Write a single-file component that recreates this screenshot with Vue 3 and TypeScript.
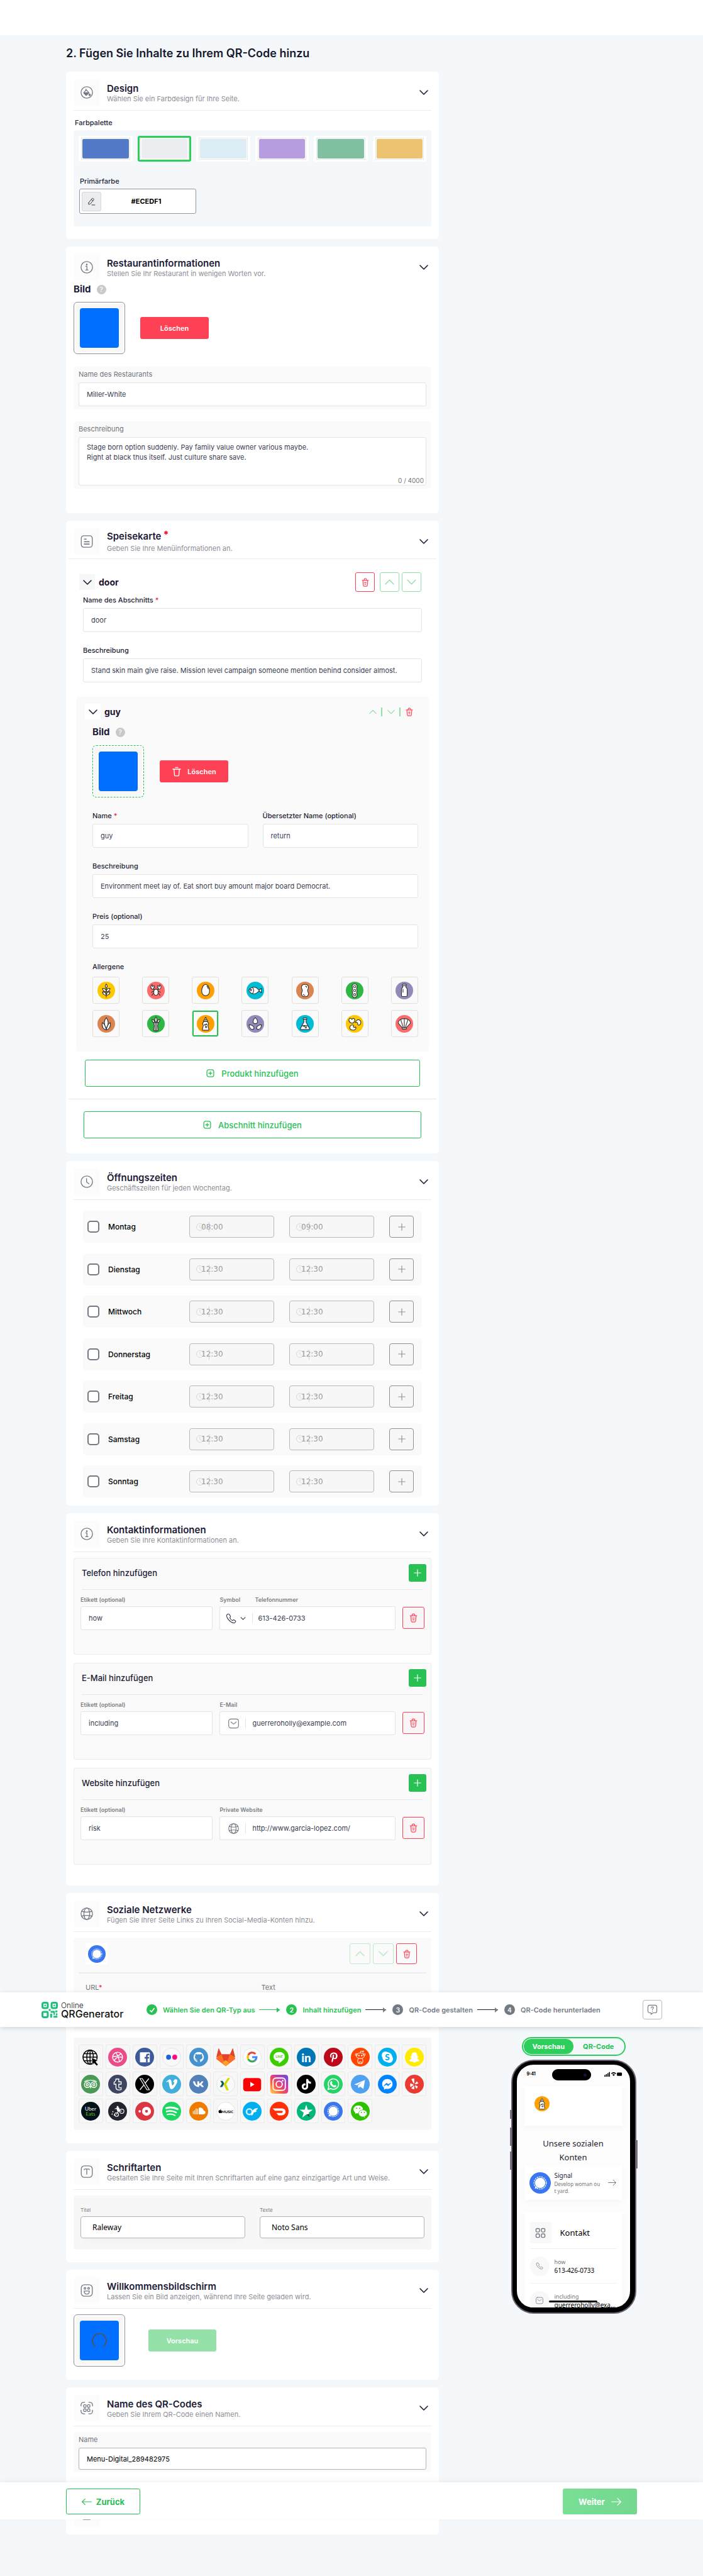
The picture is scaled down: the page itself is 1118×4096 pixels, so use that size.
<script setup lang="ts">
import { ref } from 'vue'

type Swatch = { id: string; color: string }
type Day = { name: string; from: string; to: string }
type Contact = {
  id: string
  title: string
  label: string
  value: string
  fieldLabel: string
  fieldValue: string
  icon: string
}

const description = ref('Stage born option suddenly. Pay family value owner various maybe.\nRight at black thus itself. Just culture share save.')

const swatches: Swatch[] = [
  { id: 'blue', color: '#527ac9' },
  { id: 'grey', color: '#ecedf1' },
  { id: 'sky', color: '#dbecf5' },
  { id: 'lilac', color: '#b69ddf' },
  { id: 'green', color: '#7fc0a1' },
  { id: 'amber', color: '#ecc371' },
]
const selectedSwatch = ref('grey')

const days: Day[] = [
  { name: 'Montag', from: '08:00', to: '09:00' },
  { name: 'Dienstag', from: '12:30', to: '12:30' },
  { name: 'Mittwoch', from: '12:30', to: '12:30' },
  { name: 'Donnerstag', from: '12:30', to: '12:30' },
  { name: 'Freitag', from: '12:30', to: '12:30' },
  { name: 'Samstag', from: '12:30', to: '12:30' },
  { name: 'Sonntag', from: '12:30', to: '12:30' },
]

const contacts: Contact[] = [
  { id: 'tel', title: 'Telefon hinzufügen', label: 'Etikett (optional)', value: 'how', fieldLabel: 'Telefonnummer', fieldValue: '613-426-0733', icon: 'phone' },
  { id: 'mail', title: 'E-Mail hinzufügen', label: 'Etikett (optional)', value: 'including', fieldLabel: 'E-Mail', fieldValue: 'guerreroholly@example.com', icon: 'mail' },
  { id: 'web', title: 'Website hinzufügen', label: 'Etikett (optional)', value: 'risk', fieldLabel: 'Private Website', fieldValue: 'http://www.garcia-lopez.com/', icon: 'globe' },
]

// Line icons on a 24 × 24 grid, drawn with the current text colour.
const line: Record<string, string> = {
  paint: '<circle cx="12" cy="12" r="11"/><path d="M10.500 5.500v3M11 7l5 5.500-4.500 4.500a1 1 0 0 1-1.400 0L6.500 13.500a1 1 0 0 1 0-1.400z"/><path d="M6.500 12.500h9.300L11 17.300z" fill="currentColor"/><path d="M17.500 14.500c1 1.300 1.300 1.800 1.300 2.300a1.300 1.300 0 0 1-2.600 0c0-.5.4-1 1.300-2.300z" fill="currentColor"/>',
  info: '<circle cx="12" cy="12" r="11"/><path d="M10 10h2.300v7M9.800 17.200h4.700"/><circle cx="12" cy="6.800" r=".8" fill="currentColor"/>',
  menu: '<rect x="1.500" y="1" width="21" height="22" rx="5"/><path d="M7.500 7.500h3.500M7.500 12.500h9M7.500 17h9" stroke-width="2"/>',
  clock: '<circle cx="12" cy="12" r="11"/><path d="M11.600 6v6.500l4.400 3.500"/>',
  globe: '<circle cx="12" cy="12" r="11"/><ellipse cx="12" cy="12" rx="5.500" ry="11"/><path d="M2.200 7.500c6 1.600 13.600 1.600 19.600 0M2.200 16.500c6-1.600 13.600-1.600 19.600 0"/>',
  type: '<rect x="1.500" y="1" width="21" height="22" rx="6"/><path d="M7 8.500c0-1 .5-1.500 1.500-1.500h7c1 0 1.500.5 1.500 1.500M12 7v10"/>',
  smile: '<rect x="1.500" y="1" width="21" height="22" rx="6"/><circle cx="8.500" cy="8" r="1.700"/><circle cx="15.500" cy="8" r="1.700"/><path d="M7 13h10c0 4-2 6-5 6s-5-2-5-6z"/>',
  qr: '<path d="M1 8V6a5 5 0 0 1 5-5h2M16 1h2a5 5 0 0 1 5 5v2M23 16v2a5 5 0 0 1-5 5h-2M8 23H6a5 5 0 0 1-5-5v-2"/><rect x="6" y="5.500" width="4.700" height="5" rx="1.500"/><rect x="13.300" y="5.500" width="4.700" height="5" rx="1.500"/><rect x="6" y="13.500" width="4.700" height="5" rx="1.500"/><rect x="13.300" y="13.500" width="4.700" height="5" rx="1.500"/>',
  lock: '<rect x="1.500" y="1" width="21" height="22" rx="6"/>',
  phone: '<path d="M4 2.500 2 4.500C1.500 12 12 22.500 19.500 22l2.500-2.500c.8-.8.5-1.700-.3-2.300l-3-2c-.8-.5-1.500-.4-2.200.3l-1 1.200c-2.500-.8-5.700-4.300-6.300-6.700l1-1c.7-.7.8-1.300.3-2.200L8 3C7.200 1.700 5.300 1.200 4 2.500z"/>',
  mail: '<rect x="1" y="2" width="22" height="20" rx="5"/><path d="m6 8.500 4.500 3.700a2.400 2.400 0 0 0 3 0L18 8.500"/>',
  trash: '<path d="M3.500 6.500h17M8.500 6c.2-2.500.6-4 2-4h3c1.400 0 1.800 1.500 2 4M5.500 8.500l1 11.500c.2 1.700.8 2.500 2.500 2.500h6c1.700 0 2.300-.8 2.500-2.500l1-11.500M9.500 12.500h5M10.500 17h3"/>',
  bin: '<path d="M3 6h18M9 2h6M5.500 6l1.300 14.500c.1 1 .7 1.500 1.700 1.500h7c1 0 1.600-.5 1.700-1.500L18.500 6"/>',
  down: '<path d="m3 7.500 9 9 9-9"/>',
  up: '<path d="m3 16.500 9-9 9 9"/>',
  plus: '<path d="M12 3v18M3 12h18"/>',
  add: '<rect x="2" y="1.500" width="20" height="21" rx="6"/><path d="M12 7.500v9M7.500 12h9"/>',
  pen: '<path d="m4 15 9-11c1.500-1.700 3-2 4.500-.8s1.700 2.700.5 4.300l-9 11c-.6.700-1.200 1-2 1.100l-3 .400c-.6.100-.9-.2-.8-.8l.200-2.500c.1-.7.200-1.200.6-1.700zM12 5.500c.6 2.500 2 3.800 4.500 4.500M13 22h9"/>',
  left: '<path d="M23 12H1M8 5l-7 7 7 7"/>',
  right: '<path d="M1 12h22M15 4l8 8-8 8"/>',
  grid: '<rect x="2" y="2" width="8" height="8" rx="2.500"/><rect x="14" y="2" width="8" height="8" rx="2.500"/><rect x="2" y="14" width="8" height="8" rx="2.500"/><rect x="14" y="14" width="8" height="8" rx="2.500"/>',
  help: '<path d="M6 2h12a4 4 0 0 1 4 4v9a4 4 0 0 1-4 4h-4.500l-4.500 3.500V19H6a4 4 0 0 1-4-4V6a4 4 0 0 1 4-4z"/><path d="M9.500 8c0-1.500 1-2.500 2.500-2.500s2.500 1 2.500 2.300c0 1.900-2.500 2-2.500 4.200M12 14.800v.6"/>',
}

const c = (fill: string, body: string) => `<circle cx="20" cy="20" r="20" fill="${fill}"/>${body}`
const ink = (body: string) => `<g fill="#fff" stroke="#333" stroke-width="1.600" stroke-linejoin="round" stroke-linecap="round">${body}</g>`
const bottle = ink('<path d="M18 11c0-3 .8-5 2-6 1.200 1 2 3 2 6z"/><rect x="15.500" y="11" width="9" height="3.500" rx="1.200"/><path d="M16 14.500h8l3 5-2 4 2.500 9.500c0 1-.6 1.500-1.500 1.500H14c-.9 0-1.500-.5-1.500-1.500L15 23.500l-2-4z"/><circle cx="18.500" cy="22" r="1"/><circle cx="22" cy="21" r="1"/><circle cx="21" cy="27" r="1.500"/>')

const allergens: { id: string; svg: string }[] = [
  { id: 'Gluten', svg: c('#fec700', ink('<path d="M20 5c2.500 3 3.500 6 0 10-3.500-4-2.500-7 0-10z"/><path d="M20 22c-5 1-8-2-8.500-7 5 0 8 2 8.500 7zM20 22c5 1 8-2 8.500-7-5 0-8 2-8.500 7zM20 30c-5 1-8-2-8.500-7 5 0 8 2 8.500 7zM20 30c5 1 8-2 8.500-7-5 0-8 2-8.500 7zM20 15v20"/>')) },
  { id: 'Krebstiere', svg: c('#fc6b6b', ink('<path d="M15 18c-4-.5-7-3-6.500-7 .2-2 1.500-3.500 3-4l.5 4 4-2c1.500 3 .5 5.500-2 5.500zM25 18c4-.5 7-3 6.500-7-.2-2-1.500-3.500-3-4l-.5 4-4-2c-1.500 3-.5 5.500 2 5.500zM10 24c2-2 4-2 6-1M30 24c-2-2-4-2-6-1M11 31c1-3 2.500-4 4.500-4M29 31c-1-3-2.500-4-4.500-4"/><path d="M20 17c4 0 5 3 5 7s-2 7-5 7-5-3-5-7 1-7 5-7z"/>')) },
  { id: 'Eier', svg: c('#ffa000', ink('<path d="M20 6c5 0 9 8 9 15 0 6-4 11-9 11s-9-5-9-11c0-7 4-15 9-15z"/><path d="M23 10c1.500 1.500 2.500 3.500 3 6" fill="none"/>')) },
  { id: 'Fisch', svg: c('#00bcd4', ink('<path d="M28 19.500 34 15v10l-6-4.500"/><path d="M5 20c3-5 7-7.500 12-7.500S26 16 29 20c-3 4-7 7.500-12 7.500S8 25 5 20z"/><path d="M14 13.500c3 4 3 9 0 13" fill="none"/><circle cx="10" cy="19" r="1.700"/>')) },
  { id: 'Erdnüsse', svg: c('#dc8450', ink('<path d="M20 6c5 0 8 3 8 7 0 3-2 4-2 7s2 4 2 7c0 4-3 7-8 7s-8-3-8-7c0-3 2-4 2-7s-2-4-2-7c0-4 3-7 8-7z"/><path d="M21 10c2 0 3 1 3 3M16 29c1 1.500 2 2 4 2" fill="none"/>')) },
  { id: 'Soja', svg: c('#2fb743', ink('<path d="M20 5c4 0 6 3 5.500 6-.5 3-1 3-1 5s1 2 1 4-1 3-1 5 1.500 3 1 6-2 5-5.500 5-5-2-5.500-5 1-4 1-6-1-3-1-5 1-2 1-4-.5-2-1-5 1.500-6 5.500-6z"/><circle cx="20" cy="11" r="2.500"/><circle cx="20" cy="20" r="2.500"/><circle cx="20" cy="29.500" r="2.500"/>')) },
  { id: 'Milch', svg: c('#9389b8', ink('<path d="M16.500 9h7v3c0 1.500 3 2.500 3 5v14c0 1.500-1 2.500-2.500 2.500h-8c-1.500 0-2.500-1-2.500-2.500V17c0-2.500 3-3.500 3-5z"/><rect x="15.500" y="5.500" width="9" height="3.500" rx="1.500"/><path d="M17 17v7"/>')) },
  { id: 'Schalenfrüchte', svg: c('#dc8450', ink('<path d="M20 34c-6-1-11-7-9-17 4 2 7 6 9 17zM20 34c6-1 11-7 9-17-4 2-7 6-9 17z"/><path d="M20 6c5 6 6 15 0 24-6-9-5-18 0-24z"/>')) },
  { id: 'Sellerie', svg: c('#2fb743', ink('<path d="M17 18c-4-1-6-4-6-8 3 0 5 2 6 5zM23 18c4-1 6-4 6-8-3 0-5 2-6 5zM20 4c3 4 3 8 1 12h-2c-2-4-2-8 1-12z"/><path d="M15 17h10l-1 8 1 10c-3 1.500-7 1.500-10 0l1-10zM18.500 18v17M21.500 18v17"/>')) },
  { id: 'Senf', svg: c('#ffa000', bottle) },
  { id: 'Sesam', svg: c('#9389b8', ink('<path d="M20 6c3 3 5 6 5 8.500 0 3-2 5-5 5s-5-2-5-5c0-2.500 2-5.500 5-8.500zM6 22c5 0 11 3 11 7.500 0 2-1.500 3-4 3-4 0-7-5-7-10.500zM34 22c-5 0-11 3-11 7.500 0 2 1.500 3 4 3 4 0 7-5 7-10.500z"/>')) },
  { id: 'Sulfite', svg: c('#00bcd4', ink('<path d="M17.500 9h5v7L30 30c.8 1.700 0 3-1.700 3H11.700C10 33 9.200 31.700 10 30l7.500-14z"/><rect x="16" y="6.500" width="8" height="3" rx="1"/><path d="M13 25c4-1.500 10-1.500 14 0" fill="none"/><circle cx="18" cy="25" r="1.200"/><circle cx="22" cy="28" r="1.600"/>')) },
  { id: 'Lupinen', svg: c('#fec700', ink('<path d="M7 11c0-3 3-5 5-3 .5 2.500 3 2 4-.5 3-.5 5 2 4 6-1 4-5 6-9 4-3-1.500-4-4-4-6.500zM25 12c2-2 6-2 8 1s1 8-2 9.500c-3 1-5-1-4-3.500-1-3-4-3.500-5.500-2 .5-2 2-4 3.500-5zM9 30c-1-4 2-7.500 6-7.500 2.500 0 3.500 2 2 4 1.500 2 4 2 5 .5 2 1.500 1 5.500-3 7-4 1-9-.5-10-4z"/>')) },
  { id: 'Weichtiere', svg: c('#fc6b6b', ink('<path d="M16 29 6.500 19C5 13 12 8 20 8s15 5 13.500 11L24 29z"/><path d="M17.500 28 12 11M22.500 28 28 11M20 28V8"/><rect x="15" y="29" width="10" height="3" rx="1"/>')) },
]
const selectedAllergen = ref('Senf')

const t = (x: number, y: number, size: number, fill: string, s: string, extra = 'font-weight="700"') =>
  `<text x="${x}" y="${y}" font-size="${size}" fill="${fill}" text-anchor="middle" font-family="Lato, sans-serif" ${extra}>${s}</text>`

const signalArt = '<circle cx="20" cy="20" r="11.500" fill="none" stroke="#fff" stroke-width="1.400" stroke-dasharray="3 1.300"/><circle cx="20" cy="20" r="9.700" fill="#fff"/><path d="m10 31 1-5 4.500 3.500z" fill="#fff"/>'

const social: { id: string; svg: string }[] = [
  { id: 'Website', svg: '<g fill="none" stroke="#000" stroke-width="2"><circle cx="19" cy="20" r="15"/><ellipse cx="19" cy="20" rx="7" ry="15"/><path d="M19 5v30M4 20h30M6.500 12.500h25M6.500 27.500h25"/></g><path d="m22 21 14 6-5 2.500 5 6-3 3-5.500-6-3 4z" fill="#000" stroke="#f7f7f7" stroke-width="1"/>' },
  { id: 'Dribbble', svg: c('#ea4c89', '<g fill="none" stroke="#fff" stroke-width="1.900"><circle cx="20" cy="20" r="10.500"/><path d="M16 10.500c4.500 5 6.500 11 8 18.500M9.500 18.500c7.500.5 14-1.500 18-6.500M12.500 27.500c4-7 10-9 18-7"/></g>') },
  { id: 'Facebook', svg: c('#3c5a99', '<rect x="10" y="9.500" width="21" height="21.500" rx="1.500" fill="#fff"/><path d="M23 31v-8h-3v-3.300h3v-2.500c0-3 1.800-4.500 4.500-4.500 1.200 0 2 .1 2.300.2v3H28c-1.500 0-1.700.7-1.700 1.700v2.100h3.300l-.5 3.300h-2.800v8z" fill="#3c5a99"/>') },
  { id: 'Flickr', svg: '<circle cx="20" cy="20" r="19.300" fill="#f9f9f9" stroke="#dcdcdc"/><circle cx="13.500" cy="20" r="5.200" fill="#1d63dc"/><circle cx="26.500" cy="20" r="5.200" fill="#ff0a84"/>' },
  { id: 'GitHub', svg: c('#4493d0', '<circle cx="20" cy="20" r="11" fill="#fff"/><path d="M17 31v-4c-3 .5-4-1-4.500-2 3 1 3 .5 4.500 0-4-1-5-3-5-5.500 0-1.500.5-2.500 1.200-3.300-.3-1 0-2.500.3-3 1.500 0 2.500.8 3.200 1.200 2-.5 4.600-.5 6.600 0 .7-.4 1.700-1.200 3.200-1.200.3.500.6 2 .3 3 .7.8 1.200 1.800 1.200 3.300 0 2.500-1.500 5-5 5.500V31z" fill="#4493d0"/>') },
  { id: 'GitLab', svg: '<path d="M20 39 0 24l5-23 6 13h18l6-13 5 23z" fill="#fc6d26"/><path d="m20 39-9-25h18z" fill="#e24329"/><path d="M5 1 0 20l11-6zM35 1l5 19-11-6z" fill="#e24329"/><path d="m0 23 11-9 9 25z" fill="#fc6d26"/><path d="m40 23-11-9-9 25z" fill="#fc6d26"/><path d="m13 32 7-6 7 6-7 7z" fill="#fca326"/>' },
  { id: 'Google', svg: '<circle cx="20" cy="20" r="19.300" fill="#fff" stroke="#dcdcdc"/><g fill="none" stroke-width="4"><path d="M27 13.300A9.300 9.300 0 0 0 11.800 15.700" stroke="#ea4335"/><path d="M11.800 15.700a9.300 9.300 0 0 0 0 8.600" stroke="#fbbc05"/><path d="M11.800 24.300A9.300 9.300 0 0 0 26 27" stroke="#34a853"/><path d="M26 27c2-1.700 3.300-4 3.300-7H20" stroke="#4285f4"/></g>' },
  { id: 'LINE', svg: c('#3ace01', '<path d="M20 9c7 0 12 4.300 12 10 0 5-6 9.500-11.500 13.500-1 .6-1.500.2-1.200-1l.2-2.500C12 28 8 24 8 19 8 13.300 13 9 20 9z" fill="#fff"/>' + t(20, 21.5, 7, '#3ace01', 'LINE')) },
  { id: 'LinkedIn', svg: c('#0077b5', t(20, 30, 25, '#fff', 'in', 'font-weight="900"')) },
  { id: 'Pinterest', svg: c('#bd081c', '<path d="M18 31c1.500-2.500 1.800-5 2.600-8 1.200 1.800 5.500 1.800 7.300-1.500 2-3.800 1.400-9.500-3.900-11-6.500-1.800-11.500 2.500-10.700 7.500.2 1.300.9 2.700 2 3.300.8.4 1.300-1.300.9-1.900-1.400-2.400.3-6.400 4.500-6.800 4.600-.4 5.900 4 4.500 7.500-1.100 3-4.500 2.500-4-.3.3-1.700 1.600-4.500-.3-5.100-1.700-.5-3.200 1.600-2.400 4.300-.6 3-2.800 8.500-1.500 12z" fill="#fff"/>') },
  { id: 'Reddit', svg: c('#ff4500', '<g fill="none" stroke="#fff" stroke-width="1.300"><ellipse cx="20" cy="17" rx="8.500" ry="6"/><path d="M16 23c-2.500 3-1.500 8 0 10.500h8c1.500-2.500 2.500-7.500 0-10.500M20 11l1-4 3.500.8M17.500 33v-3h5v3"/><circle cx="26" cy="8" r="1.500"/><circle cx="11.500" cy="14.500" r="2"/><circle cx="28.500" cy="14.500" r="2"/></g><circle cx="17" cy="16.500" r="1.600" fill="#fff"/><circle cx="23" cy="16.500" r="1.600" fill="#fff"/>') },
  { id: 'Skype', svg: c('#00aff0', '<circle cx="16" cy="16" r="8" fill="#fff"/><circle cx="24" cy="24" r="8" fill="#fff"/><circle cx="20" cy="20" r="10.500" fill="#fff"/>' + t(20, 26.5, 18, '#00aff0', 'S', 'font-weight="900"')) },
  { id: 'Snapchat', svg: c('#ffeb00', '<path d="M20 9.500c4 0 6 2.800 6 6.500v2.500c1 .4 2-.8 2.500.4.2 1-2 1.600-2.200 2.600.7 2.500 2.500 4.200 5 5-.5 1.500-2.800 1.200-3.300 2.800-1.800 0-3-.3-4.500.7-2.300 1.700-4.700 1.700-7 0-1.500-1-2.700-.7-4.500-.7-.5-1.600-2.800-1.300-3.300-2.800 2.500-.8 4.300-2.500 5-5-.2-1-2.400-1.600-2.200-2.600.5-1.200 1.500 0 2.500-.4V16c0-3.700 2-6.500 6-6.500z" fill="#fff"/>') },
  { id: 'Tripadvisor', svg: c('#4a9a55', '<g fill="none" stroke="#fff" stroke-width="1.900"><circle cx="13" cy="21" r="6"/><circle cx="27" cy="21" r="6"/><circle cx="13" cy="21" r="2.300"/><circle cx="27" cy="21" r="2.300"/><path d="M7 14.500c7-4 19-4 26 0M19 24l1 3 1-3"/></g>') },
  { id: 'Tumblr', svg: c('#3d4560', '<path d="M16.500 9h6v6h5v5h-5v6c0 2 2 2.500 5 1v4.500c-5 1.500-11 .8-11-5V20h-4v-4c2.500-1 3.800-3.500 4-7z" fill="none" stroke="#fff" stroke-width="1.800"/>') },
  { id: 'X', svg: c('#000', '<path d="m10 8 15 24h5L15 8z" fill="none" stroke="#fff" stroke-width="1.600"/><path d="m29 8-8 10M18.500 21.500 10 32" stroke="#fff" stroke-width="1.700"/>') },
  { id: 'Vimeo', svg: c('#42aedb', '<path d="M8 15.500c3-3 6-6 8-6 5 0 3.500 13 6 13 1.500 0 4-5 3.500-6.500s-2.500-.5-2.500-.5c1-4 4-6.500 6.500-6 3.500.5 3 4.500 1.500 8-3 6.500-7.500 13-11.500 13-5 0-4.500-14-6.500-16-1-.8-2.500.7-3.500 1.300z" fill="#fff"/>') },
  { id: 'VK', svg: c('#5181b8', '<path d="M8 14h4c1 5 3.500 8 5 8.500V14h4v5c2-.5 4-3 5-5h4c-.7 2.500-2.700 4.800-4.500 6 2 1 4 3 5.500 6h-4.500c-1.200-2-3-3.500-5.500-4v4c-7 .5-12-4.500-13-12z" fill="#fff"/>') },
  { id: 'Xing', svg: '<circle cx="20" cy="20" r="19.300" fill="#f9f9f9" stroke="#dcdcdc"/><path d="M8.500 13h5l3.500 6-4.500 7h-5l4.500-7z" fill="#0b5a5e"/><path d="M24 7h5l-8 13 5.500 13h-5L15.500 20z" fill="#cfdc00"/>' },
  { id: 'YouTube', svg: '<rect x="1" y="7" width="38" height="28" rx="6" fill="#f00"/><path d="m16 15 9 5.500-9 5.500z" fill="#fff"/>' },
  { id: 'Instagram', svg: '<defs><linearGradient id="ig" x1="0" y1="1" x2="1" y2="0"><stop offset="0" stop-color="#fd5"/><stop offset=".35" stop-color="#ff543e"/><stop offset=".65" stop-color="#c837ab"/><stop offset="1" stop-color="#5b4fe0"/></linearGradient></defs><rect x="1" width="38" height="40" rx="6" fill="url(#ig)"/><g fill="none" stroke="#fff" stroke-width="2.600"><rect x="7" y="7" width="26" height="26" rx="6"/><circle cx="20" cy="20" r="6.500"/></g><circle cx="27.500" cy="12.500" r="1.700" fill="#fff"/>' },
  { id: 'TikTok', svg: c('#000', '<path d="M20 9h4c.3 3.500 2.500 5.500 6 6v4c-2.300 0-4.300-.6-6-1.800V25c0 9-13.500 9-13.500 0 0-4.500 3.500-7 8-6.500v4c-2.500-.5-4 .8-4 2.700 0 3.600 5.500 3.700 5.500-.5z" fill="#fff"/>') },
  { id: 'WhatsApp', svg: c('#25d366', '<path d="m9 31 1.700-6A11 11 0 1 1 15 29.300z" fill="none" stroke="#fff" stroke-width="2.200"/><path d="M15.500 13.500c1.500-.7 2.300 1.300 2.500 3l-1 1.500c1 2.300 2.800 4 5 5l1.500-1.500c1.500.2 3.500 1.300 3 2.500-.7 2.300-3 3-5 2.500-4.500-1.200-7.500-4.300-8.300-8-.3-2 .6-4 2.300-5z" fill="#fff"/>') },
  { id: 'Telegram', svg: c('#50a2f0', '<path d="M7 20.500 30 11l-3.500 19-7-5-3.500 3.500-1-6 9.500-7.500L13 22z" fill="#fff"/>') },
  { id: 'Messenger', svg: c('#0084ff', '<path d="M20 9c6.500 0 11 4.500 11 10.500S26.500 30 20 30c-1.200 0-2.300-.2-3.300-.5L13 31.500v-4C10.500 25.500 9 23 9 19.500 9 13.500 13.500 9 20 9z" fill="#fff"/><path d="m12.500 23.500 6-6 3 3 6-3-6 6-3-3z" fill="#0084ff" stroke="#0084ff"/>') },
  { id: 'Yelp', svg: c('#eb3a30', '<g fill="#fff" stroke="#fff" stroke-width="1.500" stroke-linejoin="round"><path d="M14.500 9.500 19 8.500v9.500zM12 19l5.500 2.500L12 25zM19 24v6l-4.500-1.500zM22 23.500l4.500 1.500-2 3.500zM22 19.500l3-4.500 2.500 3z"/></g>') },
  { id: 'Uber Eats', svg: c('#04121c', t(20, 19, 11, '#fff', 'Uber', '') + t(20, 29, 11, '#5fb709', 'Eats', '')) },
  { id: 'Postmates', svg: c('#22242e', '<g fill="none" stroke="#fff" stroke-width="1.500"><circle cx="18" cy="27" r="4"/><circle cx="29" cy="20" r="4.500"/><path d="m17 27 6-8 6 1M14 15l7-2 3 6"/></g><circle cx="20" cy="10.500" r="2" fill="#fff"/><path d="m17 13 6-1 3 8-6 1z" fill="#fff"/><g fill="#fff"><circle cx="10" cy="21" r="1.200"/><circle cx="8.500" cy="26" r="1.200"/><circle cx="13" cy="28" r="1.200"/></g>') },
  { id: 'OpenTable', svg: c('#da3743', '<circle cx="24" cy="20" r="9.500" fill="#fff"/><circle cx="24" cy="20" r="3" fill="#da3743"/><circle cx="9.500" cy="20" r="2.500" fill="#fff"/>') },
  { id: 'Spotify', svg: c('#1ed760', '<g fill="none" stroke="#fff" stroke-linecap="round"><path d="M8.500 13.500c8-2.500 17-1.700 24 2" stroke-width="4"/><path d="M9.500 20.500c6.500-2 14-1.200 20 2.200" stroke-width="3.300"/><path d="M10.500 27c5.500-1.600 12-1 16.500 1.800" stroke-width="2.600"/></g>') },
  { id: 'SoundCloud', svg: c('#ef7c00', '<path d="M20 13c6-2 10 2 10.500 6 3 0 3.800 1.800 3.800 3.700 0 2-1.500 3.800-4 3.800H20z" fill="#fff"/><path d="M17.500 15v11.500M14.500 14v12.500M11.500 18v8.500M8.500 19.500v6.500" stroke="#fff" stroke-width="1.600"/>') },
  { id: 'Apple Music', svg: '<circle cx="20" cy="20" r="19.300" fill="#fff" stroke="#dcdcdc"/><path d="M8.500 18c1-.7 2.400-.2 2.500 1.300.1 2 1.700 2.300 0 4.300-1 1-1.800.2-2.700.2s-1.700.8-2.500-.2c-1.700-2.200-1-5.600 1-5.800.7 0 1.200.4 1.700.2zM8.300 17.500c0-1.200.7-2 1.800-2.200 0 1.200-.7 2-1.800 2.200z" fill="#000"/>' + t(23.5, 23.8, 8, '#000', 'MUSIC') },
  { id: 'OnlyFans', svg: c('#00aff0', '<circle cx="14" cy="21" r="6" fill="none" stroke="#c8ecfb" stroke-width="3.500"/><path d="M18 27c1-8 5-13 14-14-.5 3-2.500 4.500-5 5l3 .5c-1 3-4 4-7 4-.5 4-2.500 6-5 6.500z" fill="#fff"/>') },
  { id: 'DoorDash', svg: c('#ff3008', '<path d="M6 14h19c5.500 0 8.500 3 8.500 7 0 4.500-3.500 7.500-8 7.500h-7l-4.500-5h11c3.500 0 3.500-4.500 0-4.500H11z" fill="#fff"/>') },
  { id: 'Trustpilot', svg: c('#00b67a', '<path d="m20 6 3.300 10.500H34L25.300 23l3.300 10.500L20 27l-8.600 6.500L14.700 23 6 16.500h10.700z" fill="#fff"/><path d="m20 27 6-1.500 2.500 8z" fill="#005128"/>') },
  { id: 'Signal', svg: c('#3a76f0', signalArt) },
  { id: 'WeChat', svg: c('#2dc100', '<ellipse cx="15.500" cy="16" rx="10" ry="8.500" fill="#fff"/><path d="m9 26 1-5 4 2zM30 34l-1-4-3 1z" fill="#fff"/><ellipse cx="25.500" cy="24.500" rx="9" ry="7.500" fill="#fff" stroke="#2dc100"/><g fill="#2dc100"><circle cx="12.500" cy="13.500" r="1.300"/><circle cx="18.500" cy="13.500" r="1.300"/><circle cx="22.500" cy="22.500" r="1.200"/><circle cx="28.500" cy="22.500" r="1.200"/></g>') },
]
</script>

<template>
  <div class="page">
    <div class="strip"></div>
    <main class="wrap">
      <h1>2. Fügen Sie Inhalte zu Ihrem QR-Code hinzu</h1>
      <div class="cols">
        <div class="cards">
          <section class="card end20">
            <header class="head">
              <span class="tile"><svg class="ic" viewBox="0 0 24 24" v-html="line.paint" /></span>
              <div class="titles"><h2>Design</h2><p>Wählen Sie ein Farbdesign für Ihre Seite.</p></div>
              <svg class="ic chev" viewBox="0 0 24 24" v-html="line.down" />
            </header>
            <h3 class="lbl palette-title">Farbpalette</h3>
            <div class="palette">
              <div class="swatches">
                <button v-for="s in swatches" :key="s.id" class="swatch" :class="{ on: s.id === selectedSwatch }" :aria-label="s.id" @click="selectedSwatch = s.id">
                  <span><i :style="{ background: s.color }"></i></span>
                </button>
              </div>
              <label class="lbl" for="primary">Primärfarbe</label>
              <div class="hex">
                <button aria-label="Farbe bearbeiten"><svg class="ic" viewBox="0 0 24 24" v-html="line.pen" /></button>
                <input id="primary" value="#ECEDF1" />
              </div>
            </div>
          </section>

          <section class="card end39">
            <header class="head plain">
              <span class="tile"><svg class="ic" viewBox="0 0 24 24" v-html="line.info" /></span>
              <div class="titles"><h2>Restaurantinformationen</h2><p>Stellen Sie Ihr Restaurant in wenigen Worten vor.</p></div>
              <svg class="ic chev" viewBox="0 0 24 24" v-html="line.down" />
            </header>
            <h3 class="bild">Bild <span class="q">?</span></h3>
            <div class="upload">
              <div class="thumb"><i></i></div>
              <button class="del">Löschen</button>
            </div>
            <div class="box first">
              <label for="rname">Name des Restaurants</label>
              <input id="rname" class="inp" value="Miller-White" />
            </div>
            <div class="box">
              <label for="rdesc">Beschreibung</label>
              <div class="area">
                <textarea id="rdesc" v-model="description" class="inp"></textarea>
                <span>0 / 4000</span>
              </div>
            </div>
          </section>

          <section class="card end24">
            <header class="head thin">
              <span class="tile"><svg class="ic" viewBox="0 0 24 24" v-html="line.menu" /></span>
              <div class="titles"><h2>Speisekarte <b class="star">*</b></h2><p>Geben Sie Ihre Menüinformationen an.</p></div>
              <svg class="ic chev" viewBox="0 0 24 24" v-html="line.down" />
            </header>
            <div class="sec-head">
              <button class="fold" aria-label="Abschnitt einklappen"><svg class="ic" viewBox="0 0 24 24" v-html="line.down" /></button>
              <h3>door</h3>
              <button class="sq red" aria-label="Abschnitt löschen"><svg class="ic" viewBox="0 0 24 24" v-html="line.trash" /></button>
              <button class="sq green gap8" aria-label="Nach oben"><svg class="ic" viewBox="0 0 24 24" v-html="line.up" /></button>
              <button class="sq green" aria-label="Nach unten"><svg class="ic" viewBox="0 0 24 24" v-html="line.down" /></button>
            </div>
            <div class="sec-body">
              <div class="field tight">
                <label class="lbl" for="sname">Name des Abschnitts <em>*</em></label>
                <input id="sname" class="inp" value="door" />
              </div>
              <div class="field">
                <label class="lbl" for="sdesc">Beschreibung</label>
                <input id="sdesc" class="inp" value="Stand skin main give raise. Mission level campaign someone mention behind consider almost." />
              </div>
            </div>
            <div class="product">
              <div class="prod-head">
                <button class="fold white" aria-label="Produkt einklappen"><svg class="ic" viewBox="0 0 24 24" v-html="line.down" /></button>
                <h3>guy</h3>
                <button class="bare green" aria-label="Nach oben"><svg class="ic" viewBox="0 0 24 24" v-html="line.up" /></button>
                <i class="bar"></i>
                <button class="bare green" aria-label="Nach unten"><svg class="ic" viewBox="0 0 24 24" v-html="line.down" /></button>
                <i class="bar"></i>
                <button class="bare red" aria-label="Produkt löschen"><svg class="ic" viewBox="0 0 24 24" v-html="line.trash" /></button>
              </div>
              <div class="prod-body">
                <h3 class="bild">Bild <span class="q">?</span></h3>
                <div class="upload">
                  <div class="thumb dashed"><i></i></div>
                  <button class="del"><svg class="ic" viewBox="0 0 24 24" v-html="line.bin" />Löschen</button>
                </div>
                <div class="two">
                  <div class="field">
                    <label class="lbl" for="pname">Name <em>*</em></label>
                    <input id="pname" class="inp" value="guy" />
                  </div>
                  <div class="field">
                    <label class="lbl" for="ptrans">Übersetzter Name (optional)</label>
                    <input id="ptrans" class="inp" value="return" />
                  </div>
                </div>
                <div class="field">
                  <label class="lbl" for="pdesc">Beschreibung</label>
                  <input id="pdesc" class="inp" value="Environment meet lay of. Eat short buy amount major board Democrat." />
                </div>
                <div class="field">
                  <label class="lbl" for="pprice">Preis (optional)</label>
                  <input id="pprice" class="inp" value="25" />
                </div>
                <h4 class="lbl allerg">Allergene</h4>
                <div class="allergens">
                  <button v-for="a in allergens" :key="a.id" :class="{ on: a.id === selectedAllergen }" :aria-label="a.id" @click="selectedAllergen = a.id">
                    <svg viewBox="0 0 40 40" v-html="a.svg" />
                  </button>
                </div>
              </div>
            </div>
            <button class="add prod"><svg class="ic" viewBox="0 0 24 24" v-html="line.add" />Produkt hinzufügen</button>
            <hr />
            <button class="add"><svg class="ic" viewBox="0 0 24 24" v-html="line.add" />Abschnitt hinzufügen</button>
          </section>

          <section class="card end13">
            <header class="head">
              <span class="tile"><svg class="ic" viewBox="0 0 24 24" v-html="line.clock" /></span>
              <div class="titles"><h2>Öffnungszeiten</h2><p>Geschäftszeiten für jeden Wochentag.</p></div>
              <svg class="ic chev" viewBox="0 0 24 24" v-html="line.down" />
            </header>
            <div class="days">
              <div v-for="d in days" :key="d.name" class="day">
                <label><input type="checkbox" />{{ d.name }}</label>
                <div v-for="(v, i) in [d.from, d.to]" :key="i" class="time">
                  <svg class="ic" viewBox="0 0 24 24" v-html="line.clock" />
                  <input :value="v" :aria-label="d.name + (i ? ' bis' : ' von')" disabled />
                </div>
                <button :aria-label="d.name + ' Zeit hinzufügen'"><svg class="ic" viewBox="0 0 24 24" v-html="line.plus" /></button>
              </div>
            </div>
          </section>

          <section class="card end33">
            <header class="head">
              <span class="tile"><svg class="ic" viewBox="0 0 24 24" v-html="line.info" /></span>
              <div class="titles"><h2>Kontaktinformationen</h2><p>Geben Sie Ihre Kontaktinformationen an.</p></div>
              <svg class="ic chev" viewBox="0 0 24 24" v-html="line.down" />
            </header>
            <div class="contacts">
              <div v-for="k in contacts" :key="k.id" class="contact">
                <div class="c-head">
                  <h3>{{ k.title }}</h3>
                  <button :aria-label="k.title"><svg class="ic" viewBox="0 0 24 24" v-html="line.plus" /></button>
                </div>
                <div class="c-row">
                  <div>
                    <label :for="k.id + '-l'">{{ k.label }}</label>
                    <input :id="k.id + '-l'" class="inp" :value="k.value" />
                  </div>
                  <div>
                    <div class="c-labels">
                      <span v-if="k.id === 'tel'" class="sym">Symbol</span>
                      <label :for="k.id + '-v'">{{ k.fieldLabel }}</label>
                    </div>
                    <div class="inp c-inp" :class="k.id">
                      <svg class="ic" viewBox="0 0 24 24" v-html="line[k.icon]" />
                      <svg v-if="k.id === 'tel'" class="ic mini" viewBox="0 0 24 24" v-html="line.down" />
                      <input :id="k.id + '-v'" :value="k.fieldValue" />
                    </div>
                  </div>
                  <button class="sq red" aria-label="Löschen"><svg class="ic" viewBox="0 0 24 24" v-html="line.trash" /></button>
                </div>
              </div>
            </div>
          </section>

          <section class="card end21">
            <header class="head">
              <span class="tile"><svg class="ic" viewBox="0 0 24 24" v-html="line.globe" /></span>
              <div class="titles"><h2>Soziale Netzwerke</h2><p>Fügen Sie Ihrer Seite Links zu Ihren Social-Media-Konten hinzu.</p></div>
              <svg class="ic chev" viewBox="0 0 24 24" v-html="line.down" />
            </header>
            <div class="soc">
              <div class="soc-head">
                <span class="soc-logo"><svg viewBox="0 0 40 40"><circle cx="20" cy="20" r="20" fill="#3a76f0" /><g v-html="signalArt" /></svg></span>
                <button class="sq pale" aria-label="Nach oben"><svg class="ic" viewBox="0 0 24 24" v-html="line.up" /></button>
                <button class="sq pale" aria-label="Nach unten"><svg class="ic" viewBox="0 0 24 24" v-html="line.down" /></button>
                <button class="sq red" aria-label="Löschen"><svg class="ic" viewBox="0 0 24 24" v-html="line.trash" /></button>
              </div>
              <div class="soc-body">
                <div><label for="surl">URL<em>*</em></label><input id="surl" class="inp" /></div>
                <div><label for="stext">Text</label><input id="stext" class="inp" /></div>
              </div>
            </div>
            <div class="socials">
              <button v-for="s in social" :key="s.id" :aria-label="s.id"><svg viewBox="0 0 40 40" v-html="s.svg" /></button>
            </div>
          </section>

          <section class="card end20">
            <header class="head">
              <span class="tile"><svg class="ic" viewBox="0 0 24 24" v-html="line.type" /></span>
              <div class="titles"><h2>Schriftarten</h2><p>Gestalten Sie Ihre Seite mit Ihren Schriftarten auf eine ganz einzigartige Art und Weise.</p></div>
              <svg class="ic chev" viewBox="0 0 24 24" v-html="line.down" />
            </header>
            <div class="fonts">
              <div><label for="ftitle">Titel</label><select id="ftitle"><option>Raleway</option></select></div>
              <div><label for="ftext">Texte</label><select id="ftext"><option>Noto Sans</option></select></div>
            </div>
          </section>

          <section class="card end21">
            <header class="head">
              <span class="tile"><svg class="ic" viewBox="0 0 24 24" v-html="line.smile" /></span>
              <div class="titles"><h2>Willkommensbildschirm</h2><p>Lassen Sie ein Bild anzeigen, während Ihre Seite geladen wird.</p></div>
              <svg class="ic chev" viewBox="0 0 24 24" v-html="line.down" />
            </header>
            <div class="upload welcome">
              <div class="thumb"><i><svg viewBox="0 0 24 24"><path d="M6 21A11 11 0 1 1 18 21" fill="none" stroke="#4a5568" stroke-width="2" /></svg></i></div>
              <button class="del soft">Vorschau</button>
            </div>
          </section>

          <section class="card end21">
            <header class="head">
              <span class="tile"><svg class="ic" viewBox="0 0 24 24" v-html="line.qr" /></span>
              <div class="titles"><h2>Name des QR-Codes</h2><p>Geben Sie Ihrem QR-Code einen Namen.</p></div>
              <svg class="ic chev" viewBox="0 0 24 24" v-html="line.down" />
            </header>
            <div class="box qrname">
              <label for="qname">Name</label>
              <input id="qname" class="inp" value="Menu-Digital_289482975" />
            </div>
          </section>

          <section class="card">
            <header class="head plain last">
              <span class="tile"><svg class="ic" viewBox="0 0 24 24" v-html="line.lock" /></span>
            </header>
          </section>
        </div>

        <aside class="preview">
          <div class="toggle"><button class="on">Vorschau</button><button>QR-Code</button></div>
          <div class="phone">
            <div class="screen">
              <div class="status">
                <span>9:41</span>
                <svg viewBox="0 0 36 10"><path d="M0 7h2v3H0zM3 5h2v5H3zM6 3h2v7H6zM9 1h2v9H9z" /><path d="M13.500 3.500c3-3 7-3 10 0l-1.300 1.400c-2.200-2-5.200-2-7.400 0zM16 6.200c1.500-1.400 3.500-1.400 5 0l-2.500 2.600z" /><rect x="25" y="2" width="10" height="6.500" rx="1.500" /></svg>
              </div>
              <div class="island"><i></i></div>
              <div class="p-card p-top"><svg viewBox="0 0 40 40"><circle cx="20" cy="20" r="20" fill="#ffa000" /><g v-html="bottle" /></svg></div>
              <h3>Unsere sozialen Konten</h3>
              <div class="p-card p-signal">
                <svg class="logo" viewBox="0 0 40 40"><circle cx="20" cy="20" r="20" fill="#3a76f0" /><g v-html="signalArt" /></svg>
                <div><b>Signal</b><p>Develop woman out yard.</p></div>
                <svg class="ic" viewBox="0 0 24 24" v-html="line.right" />
              </div>
              <div class="p-card p-contact">
                <div class="p-title"><span><svg class="ic" viewBox="0 0 24 24" v-html="line.grid" /></span><h4>Kontakt</h4></div>
                <div class="p-item"><span><svg class="ic" viewBox="0 0 24 24" v-html="line.phone" /></span><div><small>how</small><b>613-426-0733</b></div></div>
                <div class="p-item"><span><svg class="ic" viewBox="0 0 24 24" v-html="line.mail" /></span><div><small>including</small><b>guerreroholly@example.com</b></div></div>
              </div>
              <div class="home"></div>
            </div>
            <i class="key k1"></i><i class="key k2"></i><i class="key k3"></i><i class="key k4"></i>
          </div>
        </aside>
      </div>
    </main>

    <nav class="topbar">
      <a class="brand" href="#">
        <svg viewBox="0 0 34 34">
          <g fill="none" stroke="#20c07c" stroke-width="4"><rect x="2" y="2" width="11" height="11" rx="2.500" /><rect x="21" y="2" width="11" height="11" rx="2.500" /><rect x="2" y="21" width="11" height="11" rx="2.500" /></g>
          <g fill="#20c07c"><path d="M6 6h3v3H6zM25 6h3v3h-3zM15 15h4v4h-4zM19 19h9v8h-3v-4h-6zM29 18h4v4h-4zM18 25h4v8h-4zM25 29h8v4h-8zM30 24h3v4h-3z" /></g>
        </svg>
        <span><small>Online</small><b>QRGenerator</b></span>
      </a>
      <ol class="steps">
        <li class="done"><i><svg viewBox="0 0 12 12"><path d="m2.500 6.500 2.500 2.500 4.500-6" fill="none" stroke="#fff" stroke-width="1.700" /></svg></i>Wählen Sie den QR-Typ aus<u></u></li>
        <li class="now"><i>2</i>Inhalt hinzufügen<u></u></li>
        <li><i>3</i>QR-Code gestalten<u></u></li>
        <li><i>4</i>QR-Code herunterladen</li>
      </ol>
      <button class="help" aria-label="Hilfe"><svg class="ic" viewBox="0 0 24 24" v-html="line.help" /></button>
    </nav>

    <footer class="actions">
      <div>
        <button class="back"><svg class="ic" viewBox="0 0 24 24" v-html="line.left" />Zurück</button>
        <button class="next">Weiter<svg class="ic" viewBox="0 0 24 24" v-html="line.right" /></button>
      </div>
    </footer>
  </div>
</template>

<style>
body { background: #f4f8fb; }
</style>

<style scoped>
* { box-sizing: border-box; margin: 0; }
.page { position: relative; background: #f4f8fb; font-family: Inter, sans-serif; color: #1d1d35; padding-bottom: 64px; }
button { font: inherit; color: inherit; background: none; border: 0; padding: 0; display: flex; align-items: center; justify-content: center; }
input, textarea, select { font: inherit; color: inherit; min-width: 0; outline: 0; }
svg { display: block; flex: none; }
.ic { width: 20px; height: 20px; fill: none; stroke: currentColor; stroke-width: 1.6; stroke-linecap: round; stroke-linejoin: round; overflow: visible; }
em { font-style: normal; color: #e5243b; }

.strip { height: 56px; background: #fff; }
.wrap { max-width: 908px; margin: 0 auto; padding-top: 14px; }
h1 { font-size: 18px; line-height: 30px; font-weight: 600; margin-bottom: 14px; color: #16182b; }
.cols { display: flex; justify-content: space-between; align-items: flex-start; }
.cards { flex: 0 1 593px; min-width: 0; display: flex; flex-direction: column; gap: 12px; }
.card { background: #fff; border-radius: 6px; padding: 0 12px; }
.end13 { padding-bottom: 13px; }
.end20 { padding-bottom: 20px; }
.end21 { padding-bottom: 21px; }
.end24 { padding-bottom: 24px; }
.end33 { padding-bottom: 33px; }
.end39 { padding-bottom: 39px; }

.head { display: flex; align-items: center; padding: 12px 0 7px; border-bottom: 1px solid #ececef; }
.head.plain { padding-bottom: 0; border: 0; }
.head.last { padding-bottom: 12px; }
.head.thin { padding: 12px 8px 6px; margin: 0 -8px; }
.head.thin p { margin-top: 3px; }
.tile { width: 42px; height: 42px; border-radius: 4px; background: #fcfcfc; display: flex; align-items: center; justify-content: center; color: #747a84; }
.titles { flex: 1; margin-left: 11px; }
h2 { font-size: 15px; line-height: 20px; font-weight: 600; color: #1c1b36; display: flex; gap: 3px; }
h2 .star { color: #f0142f; line-height: 14px; }
.titles p { font-size: 11px; line-height: 13px; font-weight: 400; color: #8e8e97; }
.chev { width: 16px; height: 16px; margin-right: 4px; color: #1c1b36; stroke-width: 2.4; }

.lbl { display: block; font-size: 11px; line-height: 16px; font-weight: 500; color: #1d1d35; }
.palette-title { margin: 11px 0 4px 2px; }
.palette { background: #f4f8fb; border-radius: 4px; padding: 9px 8px 20px; }
.swatches { display: grid; grid-template-columns: repeat(6, 1fr); gap: 8px; margin-bottom: 23px; }
.swatch { height: 41px; background: #fff; border: 3px solid #fff; border-radius: 3px; align-items: stretch; }
.swatch.on { border-color: #2dce5c; }
.swatch span { flex: 1; border: 1px solid #e8e8e8; margin: 0 1px; padding: 1px; display: flex; }
.swatch i { flex: 1; border-radius: 2px; }
.palette > .lbl { margin: 0 0 4px 2px; }
.hex { width: 186px; height: 40px; margin-left: 1px; border: 1px solid #9696a0; border-radius: 3px; background: #fff; display: flex; align-items: center; padding: 0 3px; }
.hex button { width: 31px; height: 31px; background: #ecedf1; border: 1px solid #d7d7da; border-radius: 3px; color: #222; }
.hex button .ic { width: 13px; height: 13px; }
.hex input { flex: 1; border: 0; text-align: center; font-size: 11px; font-weight: 700; color: #000; padding: 0 4px 0 0; }

.bild { font-size: 15px; line-height: 22px; font-weight: 700; margin-top: 3px; display: flex; align-items: center; gap: 9px; }
.q { width: 15px; height: 15px; border-radius: 50%; background: #c8c8cd; color: #fff; font-size: 11px; line-height: 15px; text-align: center; font-weight: 400; }
.upload { display: flex; align-items: center; gap: 24px; margin-top: 9px; }
.thumb { width: 82px; height: 83px; border: 1px solid #92929b; border-radius: 6px; padding: 9px; background: #f7f7f7; box-shadow: inset 0 0 0 2px #fff; }
.thumb i { display: flex; height: 100%; border-radius: 4px; background: #006fff; align-items: center; justify-content: center; }
.thumb.dashed { border: 1px dashed #29c054; }
.thumb svg { width: 24px; height: 24px; }
.del { width: 109px; height: 35px; border-radius: 3px; background: #ff4155; color: #fff; font-size: 11px; font-weight: 600; gap: 9px; }
.del .ic { width: 16px; height: 16px; stroke-width: 2; }
.del.soft { background: #94e2a9; width: 108px; }
.welcome { gap: 37px; }

.inp { display: block; width: 100%; height: 38px; border: 1px solid #e4e4e5; border-radius: 3px; background: #fff; padding: 0 12px; font-size: 11px; color: #3b4153; }
.box { background: #fafafa; border-radius: 4px; padding: 4px 8px 5px; margin-top: 19px; }
.box.first { margin-top: 20px; }
.box label, .soc-body label { display: block; font-size: 11px; line-height: 16px; font-weight: 400; color: #70757c; margin-bottom: 5px; }
.area { position: relative; }
textarea.inp { height: 77px; padding: 7px 12px; line-height: 16px; resize: none; overflow: hidden; }
.area span { position: absolute; right: 4px; bottom: 2px; font-size: 10px; line-height: 12px; color: #777; }
.qrname { margin-top: 9px; padding-bottom: 4px; }
.qrname .inp { height: 35px; border-color: #b3b3b6; color: #000; }

.sec-head { display: flex; align-items: center; margin: 21px 16px 0 9px; gap: 4px; }
.sec-head h3, .prod-head h3 { flex: 1; font-size: 14px; line-height: 20px; font-weight: 700; color: #22122f; margin-left: 2px; }
.fold { width: 25px; height: 25px; background: #f7f7f7; color: #1c1b36; }
.fold.white { background: #fff; }
.fold .ic { width: 16px; height: 16px; stroke-width: 2.4; }
.sq { width: 31px; height: 31px; border: 1px solid; border-radius: 3px; }
.sq .ic { width: 14px; height: 14px; stroke-width: 2; }
.sq.green .ic, .sq.pale .ic { width: 17px; height: 17px; }
.red { color: #ff4155; }
.green { color: #8fe0a6; }
.pale { color: #bdebca; }
.gap8 { margin-left: 4px; }
.sec-body { padding: 0 15px; }
.field { margin-top: 21px; }
.field.tight { margin-top: 5px; }
.field .lbl { margin-bottom: 5px; }
.product { margin: 23px 4px 0; background: #fafafa; border-radius: 4px; padding: 11px 17px 23px 14px; }
.prod-head { display: flex; align-items: center; }
.prod-head h3 { margin-left: 6px; }
.bare .ic { width: 14px; height: 14px; stroke-width: 2; }
.bar { width: 2px; height: 14px; background: #8fe0a6; margin: 0 7px 0 6px; }
.prod-head .red { margin: 0 7px 0 0; }
.prod-body { padding-left: 12px; }
.prod-body .bild { margin-top: 9px; }
.prod-body .upload { margin-top: 10px; gap: 25px; }
.two { display: grid; grid-template-columns: 1fr 1fr; gap: 23px; }
.allerg { margin: 21px 0 8px; }
.allergens { display: grid; grid-template-columns: repeat(7, 43px); justify-content: space-between; gap: 10px 0; }
.allergens button { height: 43px; border: 1px solid #e2e2da; border-radius: 3px; }
.allergens button.on { box-shadow: inset 0 0 0 2px #29c054; }
.allergens svg { width: 28px; height: 28px; }
.add { width: calc(100% - 32px); height: 43px; margin: 19px 16px 0; border: 1px solid #29c054; border-radius: 3px; color: #29c054; font-size: 13px; font-weight: 500; gap: 11px; }
.add.prod { width: calc(100% - 36px); margin: 13px 18px 0; }
.add .ic { width: 13px; height: 13px; stroke-width: 2.4; }
hr { border: 0; height: 1px; background: #e8e8ea; margin: 19px -8px 0; }

.days { margin-top: 17px; padding: 0 15px; height: 456px; display: flex; flex-direction: column; justify-content: space-between; }
.day { height: 51px; background: #fafafa; border-radius: 5px; display: flex; align-items: center; gap: 24px; padding: 0 13px 0 7px; }
.day label { flex: 1; display: flex; align-items: center; gap: 14px; font-size: 12px; font-weight: 500; color: #000; }
.day input[type='checkbox'] { appearance: none; width: 19px; height: 19px; margin: 0; border: 2px solid #747a84; border-radius: 5px; background: #fff; }
.time { position: relative; width: 135px; height: 35px; border: 1px solid #b8b8bb; border-radius: 4px; background: #f7f7f7; display: flex; align-items: center; padding-left: 10px; }
.time .ic { width: 12px; height: 12px; color: #d0d0d3; }
.time::after { content: ''; position: absolute; left: 30px; top: 9px; width: 1px; height: 16px; background: #d0d0d3; }
.time input { border: 0; background: none; padding: 0; width: 90px; margin-left: -4px; font-family: 'DejaVu Sans', sans-serif; font-size: 12px; color: #9a9a9a; }
.day button { width: 39px; height: 35px; border: 1px solid #8f8f98; border-radius: 4px; background: #f7f7f7; color: #8f8f98; }
.day button .ic { width: 14px; height: 14px; stroke-width: 2; }

.contacts { display: flex; flex-direction: column; gap: 13px; margin-top: 9px; }
.contact { border: 1px solid #ebecec; border-radius: 3px; background: #fafafa; padding: 9px 0 38px; }
.c-head { display: flex; justify-content: space-between; align-items: center; margin: 0 12px; padding-bottom: 12px; border-bottom: 1px solid #e8e8ea; }
.c-head h3 { font-size: 13px; line-height: 20px; font-weight: 500; }
.c-head button { width: 28px; height: 28px; margin-right: -5px; background: #29c054; color: #fff; border-radius: 3px; }
.c-head .ic { width: 14px; height: 14px; stroke-width: 2; }
.c-row { display: grid; grid-template-columns: 210fr 279fr 35px; gap: 11px; padding: 10px 10px 0; align-items: end; }
.c-row label, .c-row .sym { display: block; font-size: 9px; line-height: 12px; font-weight: 600; color: #7b7f86; margin-bottom: 4px; }
.c-row .sq { width: 35px; height: 35px; margin-bottom: 2px; background: #faf6f7; }
.c-row .sq .ic { width: 15px; height: 15px; }
.c-labels { display: flex; }
.c-labels .sym { width: 56px; }
.c-inp { display: flex; align-items: center; padding: 0 12px; }
.c-inp .ic { width: 17px; height: 17px; color: #747a84; margin-left: 1px; }
.c-inp.tel { padding-left: 8px; }
.c-inp.tel .ic { color: #3b4153; }
.c-inp .mini { width: 9px; height: 9px; margin-left: 6px; stroke-width: 3; }
.c-inp input { flex: 1; height: 16px; border: 0; border-left: 1px solid #e4e4e5; margin-left: 10px; padding: 0 0 0 10px; background: none; }
.c-inp.tel input { padding-left: 8px; }

.soc { margin-top: 9px; background: #fafafa; border-radius: 4px; padding: 8px 8px 17px; }
.soc-head { display: flex; align-items: center; gap: 4px; padding: 0 15px 12px 11px; border-bottom: 2px solid #ececef; }
.soc-logo { width: 35px; height: 35px; margin-right: auto; background: #fff; border-radius: 3px; display: flex; align-items: center; justify-content: center; }
.soc-logo svg { width: 28px; height: 28px; }
.soc-head .sq { width: 33px; height: 33px; }
.soc-head .pale .ic { stroke-width: 2.4; }
.soc-body { display: grid; grid-template-columns: 1fr 1fr; gap: 28px; padding: 14px 11px 0; }
.soc-body > div { min-width: 0; }
.socials { margin-top: 12px; background: #f7f7f7; border-radius: 4px; padding: 11px 8px; display: grid; grid-template-columns: repeat(13, 1fr); gap: 4px; }
.socials button { height: 39px; border: 1px solid #ebebeb; border-radius: 3px; }
.socials svg { width: 30px; height: 30px; }

.fonts { margin-top: 9px; background: #f7f7f7; border-radius: 4px; padding: 17px 11px 18px; display: grid; grid-template-columns: 1fr 1fr; gap: 23px; }
.fonts label { display: block; font-size: 8px; line-height: 12px; color: #7b7f86; margin-bottom: 4px; }
.fonts select { appearance: none; display: block; width: 100%; height: 35px; border: 1px solid #b3b3b6; border-radius: 4px; background: #fff; padding: 0 18px; font-family: 'Noto Sans', sans-serif; font-size: 12px; color: #000; box-shadow: 0 14px 8px -6px #f3f3f3; }

.preview { flex: none; width: 202px; margin-top: 3125px; display: flex; flex-direction: column; align-items: center; gap: 6px; }
.toggle { width: 165px; height: 30px; border: 2px solid #2dce5c; border-radius: 15px; padding: 1px; display: flex; background: #f4f8fb; }
.toggle button { flex: 1; border-radius: 12px; font-size: 11px; font-weight: 700; color: #29c054; }
.toggle .on { background: #2dce5c; color: #fff; }
.phone { position: relative; width: 199px; height: 404px; border: 2px solid #6b6170; border-radius: 36px; background: #000; padding: 6px 8px 8px 7px; }
.screen { position: relative; height: 386px; border-radius: 26px; background: #fdfdfd; overflow: hidden; padding: 0 12px; font-family: 'Noto Sans', sans-serif; }
.status { height: 34px; display: flex; justify-content: space-between; padding: 9px 0 0 4px; font-family: Inter, sans-serif; font-size: 7px; line-height: 12px; font-weight: 700; color: #000; }
.status svg { width: 29px; height: 8px; margin-top: 2px; }
.island { position: absolute; left: 56px; top: 7px; width: 62px; height: 18px; border-radius: 9px; background: #000; }
.island i { position: absolute; right: 7px; top: 7px; width: 5px; height: 5px; border-radius: 50%; background: #11123f; }
.p-card { background: #fff; box-shadow: 0 3px 10px rgba(0, 0, 0, 0.04); }
.p-top { height: 63px; padding: 16px; }
.p-top svg { width: 24px; height: 24px; }
.screen h3 { margin: 17px 20px 2px; font-size: 13px; line-height: 22px; font-weight: 400; text-align: center; color: #1d2230; }
.p-signal { height: 55px; display: flex; align-items: center; padding: 0 10px 0 8px; gap: 6px; }
.p-signal .logo { width: 34px; height: 34px; }
.p-signal > div { flex: 1; min-width: 0; margin-right: 4px; }
.p-signal b { display: block; font-size: 10px; line-height: 15px; font-weight: 400; }
.p-signal p { font-size: 8px; line-height: 11px; color: #777; word-break: break-all; }
.p-signal .ic { width: 13px; height: 13px; color: #777; stroke-width: 1.8; }
.p-contact { margin-top: 19px; padding: 16px 9px 0; }
.p-title { display: flex; align-items: center; gap: 14px; padding-bottom: 8px; }
.p-title span { width: 34px; height: 34px; border-radius: 3px; background: #f8f8f8; display: flex; align-items: center; justify-content: center; color: #747a84; }
.p-title .ic { width: 17px; height: 17px; stroke-width: 2; }
.p-title h4 { font-size: 13px; font-weight: 400; color: #000; }
.p-item { height: 55px; border-top: 1px solid #f0f0f0; display: flex; align-items: center; gap: 8px; }
.p-item > span { flex: none; width: 31px; height: 31px; border-radius: 50%; background: #f8f8f8; display: flex; align-items: center; justify-content: center; color: #747a84; }
.p-item .ic { width: 12px; height: 12px; }
.p-item > div { min-width: 0; }
.p-item small { display: block; font-size: 9px; line-height: 13px; color: #777; }
.p-item b { display: block; font-size: 10px; line-height: 14px; font-weight: 400; color: #000; overflow: hidden; text-overflow: ellipsis; white-space: nowrap; }
.home { position: absolute; left: 51px; bottom: 8px; width: 77px; height: 3px; border-radius: 2px; background: #000; }
.key { position: absolute; width: 2px; background: #7b6f80; left: -4px; }
.k1 { top: 78px; height: 14px; }
.k2 { top: 106px; height: 29px; }
.k3 { top: 144px; height: 29px; }
.k4 { top: 126px; height: 45px; left: auto; right: -4px; }

.topbar { position: absolute; left: 0; right: 0; top: 3168px; height: 55px; background: #fff; box-shadow: 0 2px 8px rgba(0, 0, 0, 0.14); display: flex; align-items: center; padding: 0 65px 0 66px; }
.brand { display: flex; align-items: center; gap: 5px; color: #111; text-decoration: none; width: 167px; }
.brand svg { width: 26px; height: 26px; }
.brand span { display: block; }
.brand small { display: block; font-size: 12px; line-height: 12px; font-weight: 300; }
.brand b { display: block; font-size: 16px; line-height: 14px; font-weight: 500; white-space: nowrap; }
.steps { list-style: none; padding: 0; flex: 1; display: flex; gap: 10px; }
.steps li { display: flex; align-items: center; font-size: 11px; font-weight: 600; color: #747a84; white-space: nowrap; }
.steps i { width: 17px; height: 17px; margin-right: 9px; border-radius: 50%; background: #747a84; color: #fff; font-style: normal; font-size: 10px; display: flex; align-items: center; justify-content: center; }
.steps i svg { width: 12px; height: 12px; }
.steps .done, .steps .now { color: #29c054; }
.steps .done i, .steps .now i { background: #29c054; }
.steps u { position: relative; width: 33px; height: 1px; margin-left: 7px; background: #1c1b36; }
.steps .done u { background: #29c054; }
.steps u::after { content: ''; position: absolute; right: 0; top: -3px; border: solid transparent; border-width: 4px 0 4px 5px; border-left-color: #747a84; }
.steps .done u::after { border-left-color: #29c054; }
.help { width: 31px; height: 31px; border: 1px solid #b8b8bb; border-radius: 4px; color: #747a84; }
.help .ic { width: 17px; height: 17px; }

.actions { position: absolute; left: 0; right: 0; top: 3947px; height: 59px; background: #fff; box-shadow: 0 -2px 8px rgba(0, 0, 0, 0.05); padding: 10px 20px; }
.actions > div { max-width: 908px; margin: 0 auto; display: flex; justify-content: space-between; }
.actions button { width: 118px; height: 41px; border-radius: 3px; font-size: 13px; font-weight: 700; gap: 7px; }
.actions .ic { width: 16px; height: 16px; }
.back { border: 1px solid #29c054; color: #29c054; }
.actions .next { gap: 10px; color: #fff; background: linear-gradient(100deg, #79e096, #74d78f); }
</style>
